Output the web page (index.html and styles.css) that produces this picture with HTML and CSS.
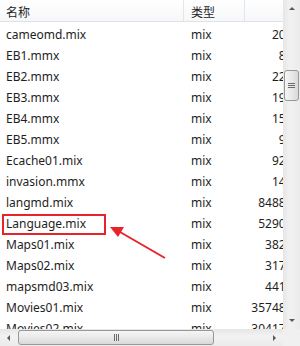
FILE: index.html
```html
<!DOCTYPE html>
<html lang="zh-CN">

<head>
    <meta charset="UTF-8">
    <meta name="viewport" content="width=device-width, initial-scale=1.0">
    <title>mix files</title>
    <link rel="stylesheet" href="styles.css">
</head>

<body>
    <div class="explorer">
        <div class="list">
            <div class="header">
                <div class="col name">名称</div>
                <div class="col type">类型</div>
                <div class="col size"></div>
            </div>
            <div class="rows">
                <div class="row"><span class="name">cameomd.mix</span><span class="type">mix</span><span class="size">20 KB</span></div>
                <div class="row"><span class="name">EB1.mmx</span><span class="type">mix</span><span class="size">8 KB</span></div>
                <div class="row"><span class="name">EB2.mmx</span><span class="type">mix</span><span class="size">22 KB</span></div>
                <div class="row"><span class="name">EB3.mmx</span><span class="type">mix</span><span class="size">19 KB</span></div>
                <div class="row"><span class="name">EB4.mmx</span><span class="type">mix</span><span class="size">15 KB</span></div>
                <div class="row"><span class="name">EB5.mmx</span><span class="type">mix</span><span class="size">9 KB</span></div>
                <div class="row"><span class="name">Ecache01.mix</span><span class="type">mix</span><span class="size">92 KB</span></div>
                <div class="row"><span class="name">invasion.mmx</span><span class="type">mix</span><span class="size">14 KB</span></div>
                <div class="row"><span class="name">langmd.mix</span><span class="type">mix</span><span class="size">8488 KB</span></div>
                <div class="row"><span class="name">Language.mix</span><span class="type">mix</span><span class="size">5290 KB</span></div>
                <div class="row"><span class="name">Maps01.mix</span><span class="type">mix</span><span class="size">382 KB</span></div>
                <div class="row"><span class="name">Maps02.mix</span><span class="type">mix</span><span class="size">317 KB</span></div>
                <div class="row"><span class="name">mapsmd03.mix</span><span class="type">mix</span><span class="size">441 KB</span></div>
                <div class="row"><span class="name">Movies01.mix</span><span class="type">mix</span><span class="size">35748 KB</span></div>
                <div class="row"><span class="name">Movies02.mix</span><span class="type">mix</span><span class="size">30417 KB</span></div>
            </div>
        </div>

        <div class="vscroll">
            <div class="arrow up"></div>
            <div class="track">
                <div class="thumb"><span class="grip"></span></div>
            </div>
            <div class="arrow down"></div>
        </div>

        <div class="hscroll">
            <div class="arrow left"></div>
            <div class="track">
                <div class="thumb"><span class="grip"></span></div>
            </div>
            <div class="arrow right"></div>
        </div>

        <div class="corner"></div>

        <!-- annotation drawn over the list -->
        <div class="highlight"></div>
        <svg class="pointer" width="300" height="346" viewBox="0 0 300 346">
            <line x1="165" y1="258" x2="120" y2="232" stroke="#e8242a" stroke-width="2" />
            <polygon points="110,227 124,227 118,237" fill="#e8242a" />
        </svg>
    </div>
</body>

</html>
```

FILE: styles.css
```css
* {
    margin: 0;
    padding: 0;
    box-sizing: border-box;
}

body {
    background-color: #fff;
    color: #1e1e1e;
    font-family: "Noto Sans", "Noto Sans CJK SC", sans-serif;
    font-size: 12px;
}

.explorer {
    position: relative;
    width: 300px;
    height: 346px;
    display: grid;
    grid-template-columns: 283px 17px;
    grid-template-rows: 329px 17px;
    overflow: hidden;
}

.list {
    overflow: hidden;
}

.header {
    display: flex;
    height: 22px;
    background: linear-gradient(#ffffff, #f6f7f9);
    border-bottom: 1px solid #dfe2e7;
}

.header .col {
    flex-shrink: 0;
    padding-top: 2px;
    line-height: 19px;
    font-family: "Noto Sans CJK SC", sans-serif;
    border-right: 1px solid #e4e6ea;
}

.col.name {
    width: 184px;
    padding-left: 6px;
}

.col.type {
    width: 61px;
    padding-left: 7px;
}

.col.size {
    width: 80px;
    border-right: none;
}

.rows {
    padding-top: 2px;
}

.row {
    display: flex;
    height: 21px;
    line-height: 21px;
    white-space: nowrap;
}

.row span {
    flex-shrink: 0;
}

.row .name {
    width: 184px;
    padding-left: 6px;
}

.row .type {
    width: 61px;
    padding-left: 7px;
}

.row .size {
    width: 59px;
    text-align: right;
}

/* scrollbars */

.vscroll {
    display: flex;
    flex-direction: column;
    background: linear-gradient(to right, #e6e6e6, #f2f2f2 40%, #ebebeb);
}

.hscroll {
    display: flex;
    background: linear-gradient(#e6e6e6, #f2f2f2 40%, #ebebeb);
}

.corner {
    background-color: #f0f0f0;
}

.arrow {
    width: 17px;
    height: 17px;
    flex-shrink: 0;
    display: flex;
    align-items: center;
    justify-content: center;
}

.arrow::before {
    content: '';
    width: 0;
    height: 0;
    border: 3px solid transparent;
}

.arrow.up::before {
    border-bottom: 3px solid #5a5a5a;
    margin-top: -3px;
}

.arrow.down::before {
    border-top: 3px solid #5a5a5a;
    margin-top: 3px;
}

.arrow.left::before {
    border-right: 3px solid #5a5a5a;
    margin-left: -3px;
}

.arrow.right::before {
    border-left: 3px solid #5a5a5a;
    margin-left: 3px;
}

.vscroll .track {
    flex-grow: 1;
    padding: 53px 1px 0 1px;
}

.hscroll .track {
    flex-grow: 1;
    padding: 1px 0 1px 1px;
}

.thumb {
    border: 1px solid #989898;
    border-radius: 3px;
    background: linear-gradient(to right, #f5f5f5, #e9e9e9 50%, #d9d9d9);
    display: flex;
    align-items: center;
    justify-content: center;
}

.vscroll .thumb {
    height: 31px;
}

.hscroll .thumb {
    width: 196px;
    height: 15px;
    background: linear-gradient(#f5f5f5, #e9e9e9 50%, #d9d9d9);
}

.grip {
    display: block;
}

.vscroll .grip {
    width: 7px;
    height: 5px;
    border-top: 1px solid #6b6b6b;
    border-bottom: 1px solid #6b6b6b;
    background: linear-gradient(transparent 1px, #6b6b6b 1px, #6b6b6b 2px, transparent 2px);
}

.hscroll .grip {
    width: 5px;
    height: 7px;
    border-left: 1px solid #6b6b6b;
    border-right: 1px solid #6b6b6b;
    background: linear-gradient(to right, transparent 1px, #6b6b6b 1px, #6b6b6b 2px, transparent 2px);
}

/* annotation */

.highlight {
    position: absolute;
    left: 2px;
    top: 214px;
    width: 104px;
    height: 21px;
    border: 2px solid #e8242a;
}

.pointer {
    position: absolute;
    left: 0;
    top: 0;
    pointer-events: none;
}
```
